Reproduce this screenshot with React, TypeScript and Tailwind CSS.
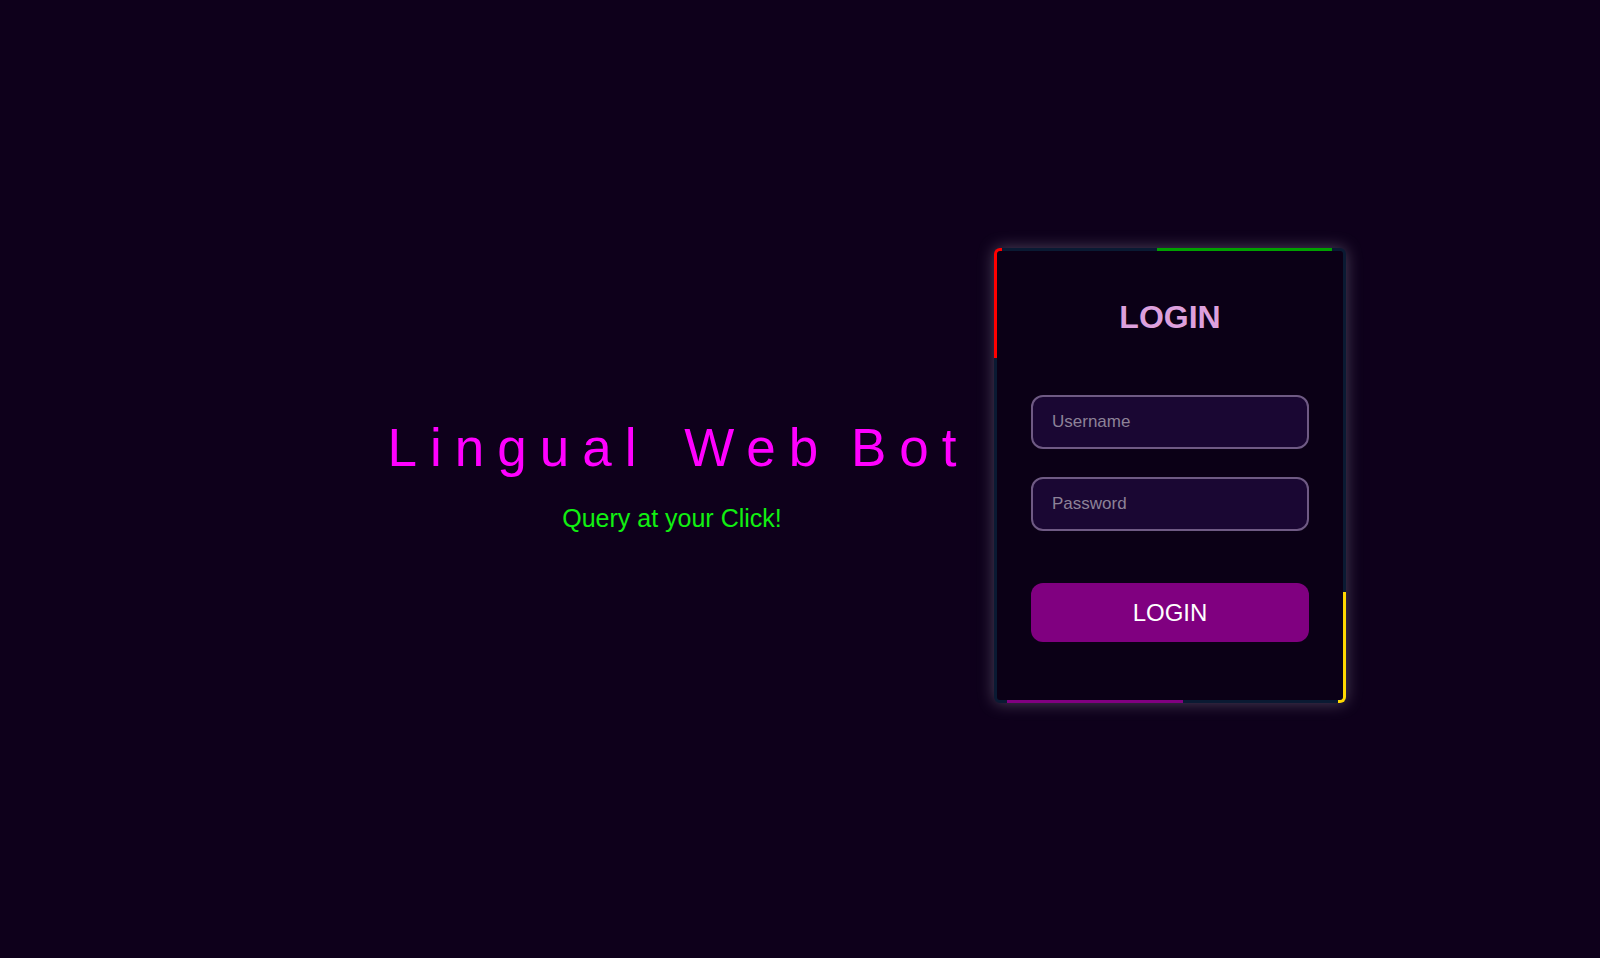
export default function App() {
  return (
    <div className="min-h-screen bg-[#0e001b] font-['Liberation_Sans',Arial,sans-serif]">
      <div className="flex items-center pl-[372px] pt-[248px]">
        <div className="w-[600px] flex flex-col items-center text-center">
          <h1 className="pl-[13px] text-[53px] leading-[53px] tracking-[13px] font-normal text-[#ff00ff]">
            Lingual <span className="ml-[7px]">Web</span>
            <span className="-ml-[8px]"> Bot</span>
          </h1>
          <p className="mt-[32px] text-[25px] leading-[24px] text-[#11f011]">Query at your Click!</p>
        </div>

        <div className="ml-[22px] relative w-[352px] rounded-[6px] border-[3px] border-[#0a1a33] bg-[#0b0016] shadow-[0_0_16px_rgba(200,195,215,0.35)]">
          {/* moving border bits */}
          <span className="absolute -left-[3px] -top-[3px] w-[8px] h-[110px] border-l-[3px] border-t-[3px] border-[#ff0000] rounded-tl-[6px]"></span>
          <span className="absolute -top-[3px] left-[160px] w-[175px] h-[3px] bg-[#00a000]"></span>
          <span className="absolute -bottom-[3px] left-[10px] w-[176px] h-[3px] bg-[#800080]"></span>
          <span className="absolute -right-[3px] -bottom-[3px] w-[8px] h-[111px] border-r-[3px] border-b-[3px] border-[#ffd700] rounded-br-[6px]"></span>

          <div className="flex flex-col px-[34px] pt-[50px] pb-[58px]">
            <h2 className="text-center text-[32px] leading-[32px] font-bold text-[#dda0dd]">LOGIN</h2>
            <input
              type="text"
              placeholder="Username"
              className="mt-[62px] h-[54px] w-full rounded-[12px] border-2 border-[#6f5a84] bg-[#1a0733] px-[19px] text-[17px] text-white placeholder:text-[#8d8298] outline-none"
            />
            <input
              type="password"
              placeholder="Password"
              className="mt-[28px] h-[54px] w-full rounded-[12px] border-2 border-[#6f5a84] bg-[#1a0733] px-[19px] text-[17px] text-white placeholder:text-[#8d8298] outline-none"
            />
            <button className="mt-[52px] h-[59px] w-full rounded-[12px] bg-[#800080] text-[24px] text-white">
              LOGIN
            </button>
          </div>
        </div>
      </div>
    </div>
  )
}
